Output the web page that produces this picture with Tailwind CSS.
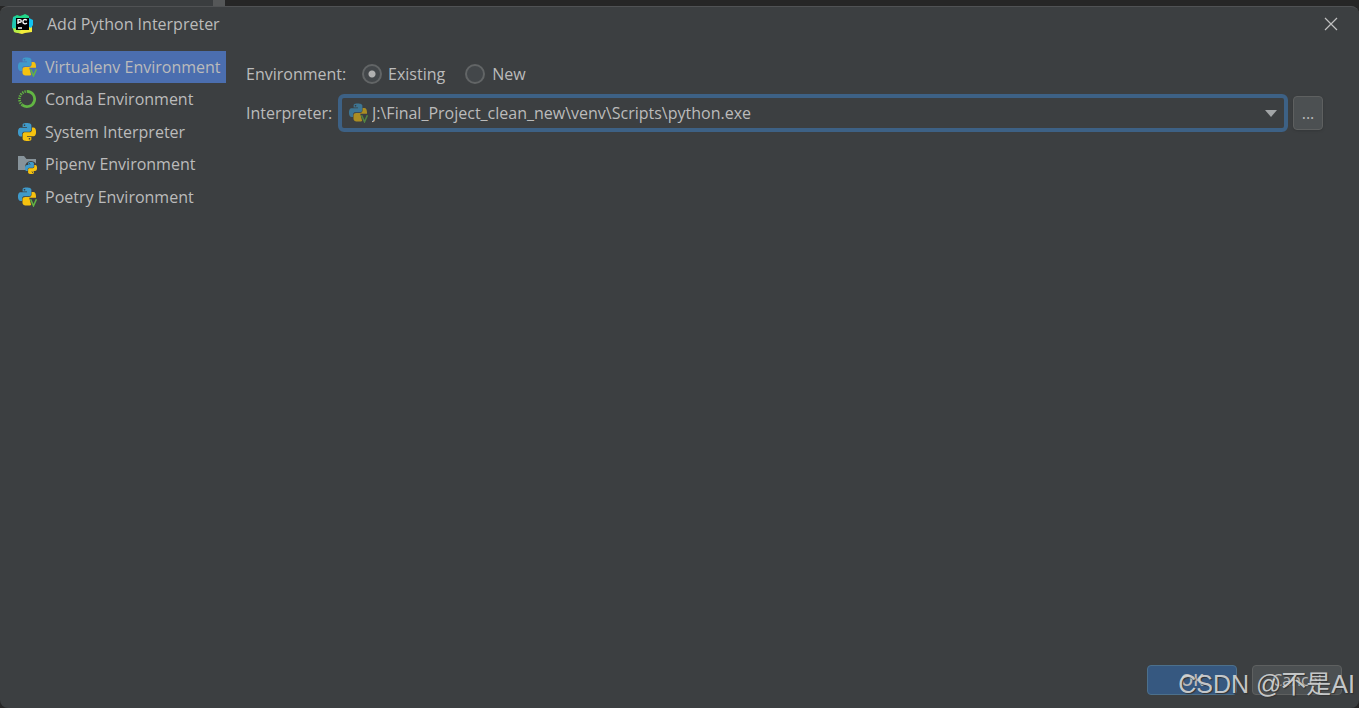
<!DOCTYPE html>
<html lang="en">
<head>
<meta charset="utf-8">
<title>Add Python Interpreter</title>
<script src="https://cdn.jsdelivr.net/npm/@tailwindcss/browser@4"></script>
</head>
<body class="flex h-screen flex-col overflow-hidden bg-[#262626] font-['Open_Sans','Noto_Sans_CJK_SC',sans-serif] text-base text-[#bbbbbb]">
<svg class="hidden">
  <defs>
    <path id="snake" d="M14.25.18l.9.2.73.26.59.3.45.32.34.34.25.34.16.33.1.3.04.26.02.2-.01.13V8.5l-.05.63-.13.55-.21.46-.26.38-.3.31-.33.25-.35.19-.35.14-.33.1-.3.07-.26.04-.21.02H8.77l-.69.05-.59.14-.5.22-.41.27-.33.32-.27.35-.2.36-.15.37-.1.35-.07.32-.04.27-.02.21v3.06H3.17l-.21-.03-.28-.07-.32-.12-.35-.18-.36-.26-.36-.36-.35-.46-.32-.59-.28-.73-.21-.88-.14-1.05-.05-1.23.06-1.22.16-1.04.24-.87.32-.71.36-.57.4-.44.42-.33.42-.24.4-.16.36-.1.32-.05.24-.01h.16l.06.01h8.16v-.83H6.18l-.01-2.75-.02-.37.05-.34.11-.31.17-.28.25-.26.31-.23.38-.2.44-.18.51-.15.58-.12.64-.1.71-.06.77-.04.84-.02 1.27.05zm-6.3 1.98l-.23.33-.08.41.08.41.23.34.33.22.41.09.41-.09.33-.22.23-.34.08-.41-.08-.41-.23-.33-.33-.22-.41-.09-.41.09z"/>
    <symbol id="python" viewBox="0 0 24 24">
      <use href="#snake" fill="#3f9aca"/>
      <use href="#snake" fill="#f5c20f" transform="rotate(180 12 12)"/>
    </symbol>
    <symbol id="venv" viewBox="0 0 20 20">
      <use href="#snake" fill="#3f9aca" transform="translate(1 .5) scale(.75)"/>
      <path fill="#f5c20f" d="M14.600 5h1.700c1.900 0 2.700 2 2.700 4.500v1.300h-6.800l2 7.200c-1 .4-2.500.6-4 .5-3-.1-4.700-.9-4.700-2.600v-3.600c0-1.600 1.200-2.300 2.600-2.300h3.500c2 0 3-1.200 3-2.800z"/>
      <path fill="none" stroke="#62b543" stroke-width="1.500" d="M13.600 12.200l2.900 6.600 2.900-6.600"/>
    </symbol>
  </defs>
</svg>

<!-- Strip of the editor window behind the dialog -->
<div class="flex h-[6px] shrink-0">
  <div class="w-[213px] bg-[#3a3d3f]"></div>
  <div class="w-3 bg-[#555758]"></div>
</div>

<main class="flex flex-1 flex-col rounded-lg border-t border-[#505254] bg-[#3c3f41]">
  <header class="flex h-[34px] items-center pr-5 pl-3">
    <svg class="size-[22px]" viewBox="0 0 22 22">
      <path fill="#21d789" d="M1 4l4-2 3 1 3-1 2-1 4 2v4L7 18 0 15z"/>
      <path fill="#20c7b5" d="M0 14l1-9 3-2v9l-2 6z"/>
      <path fill="#f4ee3b" d="M3 17l12 0 3-9 2 2v9l-7 1-3 1-4-1-4-1z"/>
      <path fill="#b6ee46" d="M1 15l8 2-2 3-5-1z"/>
      <path fill="#12c2f0" d="M17 5l4 2v5l-2 3-2-1z"/>
      <path d="M4 5h13v12H4z"/>
      <path fill="none" stroke="#fff" stroke-width="1.400" d="M6 11V6.600h1.900a1.350 1.350 0 010 2.700H6M14.900 7.300c-1.700-1.500-4-.6-4 1.400s2.300 2.900 4 1.400M6 15h4"/>
    </svg>
    <h1 class="ml-[13px] flex-1">Add Python Interpreter</h1>
    <button aria-label="Close"><svg class="size-4" viewBox="0 0 16 16"><path stroke="#c0c0c0" stroke-width="1.200" d="M2 2l12 12M14 2L2 14"/></svg></button>
  </header>

  <div class="flex flex-1 items-start pt-[10px] pr-9 pl-3">
    <nav class="flex h-[162px] w-[214px] shrink-0 flex-col justify-between">
      <a href="#" class="flex h-8 items-center gap-2 bg-[#4b6eaf] pb-px pl-[5px]"><svg class="size-5"><use href="#venv"/></svg>Virtualenv Environment</a>
      <a href="#" class="flex h-8 items-center gap-2 pb-px pl-[5px]">
        <svg class="size-5" viewBox="0 0 20 20" fill="none" stroke="#62b543">
          <path stroke-width="2.800" d="M10 2.400a7.600 7.600 0 11-4.500 13.700"/>
          <path stroke-width="2.600" stroke-dasharray="1.300 1" d="M5.500 16.100A7.600 7.600 0 0110 2.400"/>
        </svg>Conda Environment</a>
      <a href="#" class="flex h-8 items-center gap-2 pb-px pl-[5px]"><svg class="size-5 p-px"><use href="#python"/></svg>System Interpreter</a>
      <a href="#" class="flex h-8 items-center gap-2 pb-px pl-[5px]">
        <svg class="size-5" viewBox="0 0 20 20">
          <path fill="#87939a" d="M1 2h6l2.500 3H19v11H1z"/>
          <circle cx="14" cy="13" r="6" fill="#3c3f41"/>
          <use href="#python" x="8" y="8" width="12" height="12"/>
        </svg>Pipenv Environment</a>
      <a href="#" class="flex h-8 items-center gap-2 pb-px pl-[5px]"><svg class="size-5"><use href="#venv"/></svg>Poetry Environment</a>
    </nav>

    <form class="ml-5 min-w-0 flex-1 pt-[7px]">
      <div role="radiogroup" aria-labelledby="environment-label" class="mb-1 flex h-8 items-center">
        <span id="environment-label" class="w-[116px]">Environment:</span>
        <label class="flex items-center gap-[6px]">
          <input type="radio" name="environment" checked class="size-5 appearance-none rounded-full border-2 border-[#626566] bg-[#43474a] checked:bg-[radial-gradient(circle,#b0b0b0_3px,#43474a_4px)]">Existing</label>
        <label class="ml-5 flex items-center gap-[7px]">
          <input type="radio" name="environment" class="size-5 appearance-none rounded-full border-2 border-[#626566] bg-[#43474a]">New</label>
      </div>
      <div class="flex items-center">
        <label for="interpreter" class="w-[92px] shrink-0">Interpreter:</label>
        <div class="relative min-w-0 flex-1">
          <select id="interpreter" class="block h-[38px] w-full appearance-none rounded-md border-4 border-[#3d6185] bg-[#3c3f41] pr-9 pl-[30px] outline-none">
            <option>J:\Final_Project_clean_new\venv\Scripts\python.exe</option>
          </select>
          <svg class="pointer-events-none absolute top-[9px] left-[10px] size-5 opacity-60"><use href="#venv"/></svg>
          <svg class="pointer-events-none absolute top-4 right-[11px] h-[7px] w-3" viewBox="0 0 12 7"><path fill="#a2a5a7" d="M0 0h12L6 7z"/></svg>
        </div>
        <button type="button" class="ml-[5px] h-[34px] w-[30px] rounded-[4px] border border-[#5e6060] bg-[#4c5052] shadow-sm">...</button>
      </div>
    </form>
  </div>

  <footer class="flex justify-end gap-[15px] pr-[17px] pb-[13px]">
    <button class="h-[30px] w-[90px] rounded-[4px] border border-[#4c708c] bg-[#365880] font-semibold">OK</button>
    <button class="h-[30px] w-[90px] rounded-[4px] border border-[#5e6060] bg-[#4c5052]">Cancel</button>
  </footer>
</main>

<div class="pointer-events-none absolute right-1 bottom-1 font-['Liberation_Sans','Noto_Sans_CJK_SC',sans-serif] text-[25px] leading-10 whitespace-nowrap text-[#d8dadb]/90 [text-shadow:1px_1px_1px_#333]">CSDN @不是AI</div>
</body>
</html>
